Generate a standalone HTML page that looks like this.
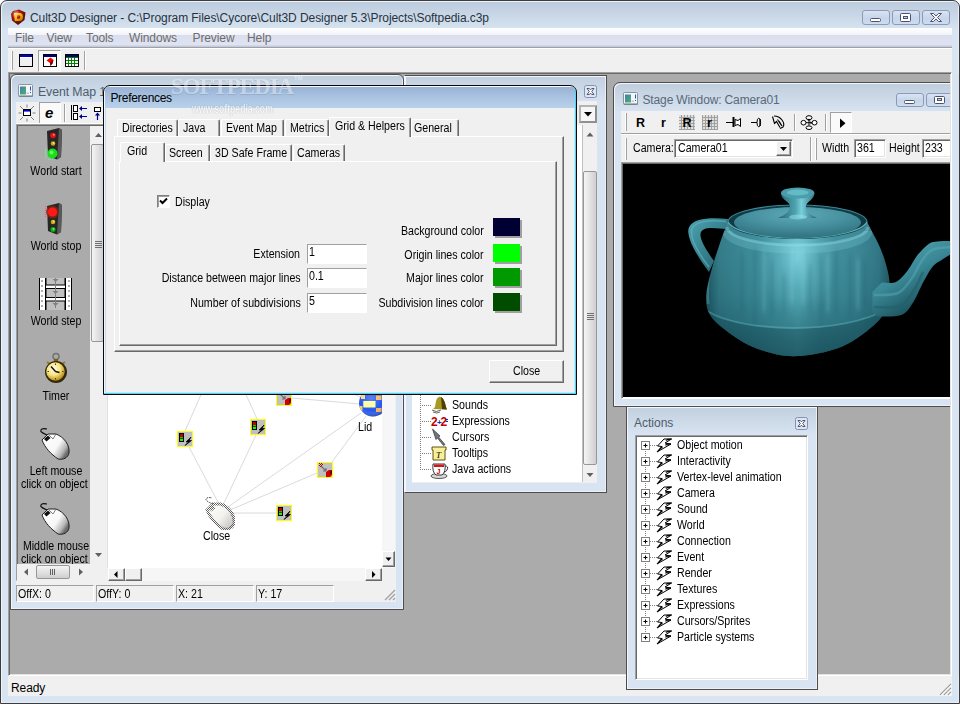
<!DOCTYPE html><html><head><meta charset="utf-8"><title>Cult3D Designer</title><style>
*{box-sizing:border-box;margin:0;padding:0}
html,body{width:960px;height:704px;overflow:hidden;background:#fff}
body{position:relative;font-family:"Liberation Sans",sans-serif}
#root{position:absolute;left:0;top:0;width:960px;height:704px;overflow:hidden}
#root div,#root svg{position:absolute}
.s{font-size:12.3px;line-height:13px;white-space:pre;transform:scaleX(.865);transform-origin:0 0}
.s.r{transform-origin:100% 0}.s.c{transform-origin:50% 0}
.sunk1{border:1px solid;border-color:#a0a0a0 #fff #fff #a0a0a0;background:#fff}
.chk{border:1px solid;border-color:#808080 #fff #fff #808080;box-shadow:inset 1px 1px 0 #a0a0a0;background:#fff}
.u{font-size:12px;line-height:14px;letter-spacing:-0.1px;white-space:pre}
.sunk{border:1px solid;border-color:#a0a0a0 #fff #fff #a0a0a0;box-shadow:inset 1px 1px 0 #696969,inset -1px -1px 0 #e3e3e3;background:#fff}
.rais{border:1px solid;border-color:#fff #696969 #696969 #fff;box-shadow:inset -1px -1px 0 #a0a0a0,inset 1px 1px 0 #f0f0f0;background:#f0f0f0}
.tab{border:1px solid;border-color:#fff #696969 transparent #fff;border-bottom:0;box-shadow:inset -1px 0 0 #a0a0a0;border-radius:2px 2px 0 0;background:#f0f0f0}
.pane{border:1px solid;border-color:#fff #696969 #696969 #fff;box-shadow:inset -1px -1px 0 #a0a0a0;background:#f0f0f0}
.cap{border:1px solid #8b9ab9;border-radius:3px;background:linear-gradient(#d9e4f3,#c6d5ea 55%,#cfdcee)}
.frame{border:1px solid #4d4d4d;background:#d8e4f1;box-shadow:inset 1px 1px 0 #f3f7fc, inset -1px -1px 0 #e9f0f8}
.sw{box-shadow:2px 2px 0 #a0a0a0}
.thumb{border:1px solid #979797;border-radius:2px;background:linear-gradient(90deg,#f5f5f5,#e2e2e2 50%,#cfcfcf)}
.thumbh{border:1px solid #979797;border-radius:2px;background:linear-gradient(#f5f5f5,#e2e2e2 50%,#cfcfcf)}
</style></head><body><div id="root">
<div style="left:0px;top:0px;width:960px;height:704px;border:1px solid #3c3c3c;border-radius:7px 7px 0 0;background:linear-gradient(#bbcbdd 0,#d8e4f1 30px,#d8e4f1 100%);box-shadow:inset 1px 1px 0 #eef3fb,inset -1px -1px 0 #e4edf8"></div>
<svg style="left:10px;top:9px" width="17" height="17" viewBox="0 0 17 17"><defs><radialGradient id="ig" cx="35%" cy="30%" r="80%"><stop offset="0" stop-color="#ffb8a8"/><stop offset=".35" stop-color="#b01616"/><stop offset="1" stop-color="#3a0606"/></radialGradient><linearGradient id="gd" x1="0" y1="0" x2="1" y2="1"><stop offset="0" stop-color="#fff3a0"/><stop offset=".5" stop-color="#f0b400"/><stop offset="1" stop-color="#a86a00"/></linearGradient></defs><path d="M3 2 L9 0.5 L15.5 3.5 L14.5 11 L8 16 L2 11.5 L1 5 Z" fill="url(#ig)"/><path d="M4 4 H9.5 Q13 4 13 8 Q13 12 9.5 12 H4.8 Z M7 6.2 V9.8 H9 Q10.3 9.8 10.3 8 Q10.3 6.2 9 6.2 Z" fill="url(#gd)" fill-rule="evenodd"/></svg>
<div class="u" style="top:10.8px;color:#27323e;letter-spacing:-.07px;left:30px;">Cult3D Designer - C:\Program Files\Cycore\Cult3D Designer 5.3\Projects\Softpedia.c3p</div>
<div class="cap" style="left:862px;top:10px;width:28px;height:15px;"></div>
<div class="cap" style="left:892px;top:10px;width:28px;height:15px;"></div>
<div class="cap" style="left:922px;top:10px;width:28px;height:15px;"></div>
<svg style="left:862px;top:10px" width="88" height="15" viewBox="0 0 88 15"><rect x="8.5" y="8.5" width="10" height="3" rx="1" fill="#fff" stroke="#4a526e"/><rect x="38.5" y="3.5" width="10" height="8" rx="1" fill="#fff" stroke="#4a526e"/><rect x="41.5" y="6.5" width="4" height="2" fill="#c6d5ea" stroke="#4a526e"/><path d="M68.5 3.5 h3 l2.5 2.6 l2.5 -2.6 h3 l-4 4 l4 4 h-3 l-2.5 -2.6 l-2.5 2.6 h-3 l4 -4 z" fill="#fff" stroke="#4a526e" stroke-linejoin="round"/></svg>
<div style="left:8px;top:28px;width:944px;height:19px;background:linear-gradient(#fff 0,#f1f3f9 7px,#d9dded 7px,#e0e4f2 17px,#c3cbe0 18px)"></div>
<div style="left:8px;top:47px;width:944px;height:1px;background:#a0a0a0"></div>
<div style="left:8px;top:48px;width:944px;height:1px;background:#fff"></div>
<div class="u" style="top:30.8px;color:#6d6d6d;left:15px;">File</div>
<div class="u" style="top:30.8px;color:#6d6d6d;left:46.5px;">View</div>
<div class="u" style="top:30.8px;color:#6d6d6d;left:86px;">Tools</div>
<div class="u" style="top:30.8px;color:#6d6d6d;left:129px;">Windows</div>
<div class="u" style="top:30.8px;color:#6d6d6d;left:192.5px;">Preview</div>
<div class="u" style="top:30.8px;color:#6d6d6d;left:247px;">Help</div>
<div style="left:8px;top:49px;width:944px;height:23px;background:#f0f0f0"></div>
<div style="left:11px;top:51px;width:1px;height:19px;background:#fff"></div>
<div style="left:12px;top:51px;width:1px;height:19px;background:#a0a0a0"></div>
<div style="left:84px;top:51px;width:1px;height:19px;background:#a0a0a0"></div>
<div style="left:85px;top:51px;width:1px;height:19px;background:#fff"></div>
<div style="left:38px;top:50px;width:23px;height:22px;background:#f8f8f8;border:1px solid;border-color:#a0a0a0 #fff #fff #a0a0a0"></div>
<svg style="left:18px;top:53px" width="64" height="15" viewBox="0 0 64 15" shape-rendering="crispEdges"><rect x="1.500" y="1.500" width="13" height="12" fill="#f0f0f0" stroke="#000"/><rect x="2" y="2" width="12" height="2" fill="#0000d0"/><rect x="2" y="4" width="12" height="1" fill="#fff"/><rect x="25.500" y="1.500" width="13" height="12" fill="#fff" stroke="#000"/><rect x="26" y="2" width="12" height="2" fill="#000080"/><rect x="47.500" y="1.500" width="13" height="12" fill="#fff" stroke="#000"/><rect x="48" y="2" width="12" height="2" fill="#000080"/><path d="M48 4.500h12 M48 7.500h12 M48 10.500h12 M50.500 4v9 M53.500 4v9 M56.500 4v9" stroke="#008000" stroke-width="1"/></svg>
<svg style="left:42px;top:53px" width="16" height="15" viewBox="24 0 16 15"><path d="M32.500 4.500 l3 2.500 l-1 3.500 l-2 2.500 l-.5 -3 l-3.500 -2.500 z" fill="#ff0000"/><path d="M35.500 7 l-1 3.500 l-2 2.500 l-.5 -3 l1.500 -2.500z" fill="#800000"/></svg>
<div style="left:8px;top:72px;width:944px;height:604px;background:#ababab;border:1px solid;border-color:#a0a0a0 #fff #fff #a0a0a0;box-shadow:inset 1px 1px 0 #696969,inset -1px -1px 0 #e3e3e3"></div>
<div style="left:8px;top:676px;width:944px;height:20px;background:#f0f0f0"></div>
<div class="u" style="top:680.8px;color:#000;left:11px;">Ready</div>
<svg style="left:939px;top:683px" width="13" height="13" viewBox="0 0 13 13"><path d="M12 1 L1 12 M12 5 L5 12 M12 9 L9 12" stroke="#a0a0a0" stroke-width="1.3"/><path d="M13 1.5 L1.5 13 M13 5.5 L5.5 13 M13 9.5 L9.5 13" stroke="#fff" stroke-width="1"/></svg>
<div class="frame" style="left:10px;top:74px;width:394px;height:536px;border-radius:6px 6px 0 0;background:linear-gradient(#bfcddd 0,#d8e4f1 30px,#d8e4f1 100%)"></div>
<svg style="left:18px;top:84px" width="15" height="13" viewBox="0 0 15 13"><defs><linearGradient id="wi18" x1="0" y1="0" x2="1" y2="1"><stop offset="0" stop-color="#3f7fb5"/><stop offset="1" stop-color="#4fb06a"/></linearGradient></defs><rect x="0.5" y="0.5" width="14" height="12" rx="1" fill="#f4f6f8" stroke="#8a949e"/><rect x="1" y="11.5" width="14" height="1" fill="#6a737c"/><rect x="2" y="2.5" width="6" height="8" fill="url(#wi18)"/><rect x="8.500" y="8.500" width="2.500" height="1.500" fill="#c4cacf"/><rect x="12" y="2.500" width="1" height="4" fill="#2a50c8"/><rect x="12" y="8" width="1" height="1" fill="#2a50c8"/></svg>
<div class="u" style="top:84.8px;color:#4f5d6b;font-size:12.3px;left:38px;">Event Map 1</div>
<div style="left:16px;top:102px;width:380px;height:500px;background:#f0f0f0"></div>
<div style="left:39px;top:102px;width:22px;height:22px;background:#fafafa;border:1px solid;border-color:#a0a0a0 #fff #fff #a0a0a0"></div>
<div style="left:64px;top:104px;width:1px;height:18px;background:#a0a0a0"></div>
<div style="left:65px;top:104px;width:1px;height:18px;background:#fff"></div>
<svg style="left:18px;top:103px" width="86" height="20" viewBox="0 0 86 20"><path d="M2 3 l3 3 M9 1.5 v3 M16 3 l-3 3 M0.5 10 h3 M17.5 10 h-3 M2 17 l3 -3 M9 18.5 v-3 M16 17 l-3 -3" stroke="#808080" stroke-width="1"/><rect x="5.5" y="6.5" width="7" height="6" fill="#fff" stroke="#000"/><rect x="6" y="7" width="6" height="1.6" fill="#0000d0"/><text x="27" y="15" font-family="Liberation Sans" font-style="italic" font-weight="bold" font-size="15" fill="#000">e</text><path d="M53.5 2 v15" stroke="#000" stroke-width="1"/><rect x="55.5" y="2.5" width="4" height="6" fill="#fff" stroke="#000"/><rect x="55.5" y="10.5" width="4" height="6" fill="#fff" stroke="#000"/><path d="M62 5.5 h7 M62 13.5 h7" stroke="#000090" stroke-width="1.2"/><path d="M61 5.5 l3 -2.5 v5z M61 13.5 l3 -2.5 v5z" fill="#000090"/><rect x="76.5" y="4.500" width="6" height="4" fill="#fff" stroke="#000"/><path d="M79.5 17 v-6" stroke="#000090" stroke-width="1.2"/><path d="M79.5 9.5 l-2.6 3 h5.2z" fill="#000090"/></svg>
<div style="left:16px;top:123px;width:380px;height:1px;background:#fff"></div>
<div style="left:16px;top:124px;width:91px;height:457px;background:#ababab;border:1px solid;border-color:#a0a0a0 #f0f0f0 #f0f0f0 #a0a0a0;box-shadow:inset 1px 1px 0 #696969"></div>
<div style="left:90px;top:126px;width:16px;height:439px;background:#f0f0f0"></div>
<div class="thumb" style="left:91px;top:144px;width:13px;height:198px;"></div>
<svg style="left:90px;top:125px" width="16" height="440" viewBox="0 0 16 440"><path d="M5 12 l3.5 -4 l3.5 4z" fill="#606060"/><path d="M5 428 l3.500 4 l3.5 -4z" fill="#606060"/><path d="M5 116.500h7M5 118.500h7M5 120.500h7M5 122.500h7" stroke="#707070"/></svg>
<div style="left:17px;top:564px;width:73px;height:16px;background:#f0f0f0"></div>
<div class="thumbh" style="left:36px;top:565px;width:34px;height:14px;"></div>
<svg style="left:17px;top:564px" width="73" height="16" viewBox="0 0 73 16"><path d="M11 4.500 v7 l-4 -3.500z" fill="#606060"/><path d="M62 4.500 v7 l4 -3.500z" fill="#606060"/><path d="M33.500 5v6M35.500 5v6M37.500 5v6" stroke="#606060"/></svg>
<div style="left:90px;top:564px;width:18px;height:16px;background:#f0f0f0"></div>
<svg style="left:43px;top:128px" width="22" height="32" viewBox="0 0 22 32"><path d="M4 3 L16 0 L19 2 L18 29 L14 31.500 L5 28 Z" fill="#262626"/><path d="M16 0 L19 2 L18 29 L14 31.500 Z" fill="#5a5a5a"/><circle cx="10" cy="7.500" r="2.800" fill="#e81010"/><circle cx="10.800" cy="6.800" r="1" fill="#ff8080"/><circle cx="10" cy="15.500" r="2.300" fill="#c8a818"/><circle cx="10.600" cy="15" r=".9" fill="#f8e860"/><circle cx="9.500" cy="25.500" r="5" fill="#18e018"/><circle cx="8.500" cy="24.500" r="2" fill="#60ff60"/><path d="M2.500 20 v11 M4 21.500 v8 M5 31.500 h6" stroke="#60ff90" stroke-width=".8" stroke-dasharray="1 1"/></svg>
<div class="s c" style="top:164.5px;color:#000;left:-44.5px;width:200px;text-align:center;">World start</div>
<svg style="left:43px;top:203px" width="22" height="32" viewBox="0 0 22 32"><path d="M4 3 L16 0 L19 2 L18 29 L14 31.500 L5 28 Z" fill="#262626"/><path d="M16 0 L19 2 L18 29 L14 31.500 Z" fill="#5a5a5a"/><circle cx="9.500" cy="9" r="6.300" fill="#702810"/><circle cx="9.500" cy="9" r="4.600" fill="#ff1818"/><path d="M2.500 3 v12 M4 4.500 v9" stroke="#ff5070" stroke-width=".8" stroke-dasharray="1 1"/><circle cx="10" cy="19" r="2.300" fill="#c8a818"/><circle cx="10.600" cy="18.500" r=".9" fill="#f8e860"/><circle cx="10" cy="26.500" r="2.500" fill="#10b010"/><circle cx="10.500" cy="26" r="1" fill="#50ff50"/></svg>
<div class="s c" style="top:239.5px;color:#000;left:-44.5px;width:200px;text-align:center;">World stop</div>
<svg style="left:39px;top:278px" width="33" height="32" viewBox="0 0 33 32"><rect x="0" y="0" width="33" height="32" fill="#fff"/><rect x="0" y="0" width="1" height="32" fill="#000"/><rect x="32" y="0" width="1" height="32" fill="#000"/><rect x="6" y="0" width="1" height="32" fill="#000"/><rect x="26" y="0" width="1" height="32" fill="#000"/><rect x="7" y="-3" width="19" height="10" fill="#c0c0c0" stroke="#000"/><rect x="7" y="10.500" width="19" height="9" fill="#c0c0c0" stroke="#000"/><rect x="7" y="23" width="19" height="12" fill="#c0c0c0" stroke="#000"/><path d="M2 2h2v2h-2zM2 7h2v2h-2zM2 12h2v2h-2zM2 17h2v2h-2zM2 22h2v2h-2zM2 27h2v2h-2zM29 2h2v2h-2zM29 7h2v2h-2zM29 12h2v2h-2zM29 17h2v2h-2zM29 22h2v2h-2zM29 27h2v2h-2z" fill="#b0b0b0"/><path d="M16.500 0v30" stroke="#808080"/><path d="M13.500 1h6l-3 3zM13.500 13h6l-3 3zM13.500 25h6l-3 3z" fill="#808080"/></svg>
<div class="s c" style="top:314.5px;color:#000;left:-44.5px;width:200px;text-align:center;">World step</div>
<svg style="left:44px;top:352px" width="24" height="32" viewBox="0 0 24 32"><defs><radialGradient id="tm" cx="40%" cy="35%" r="65%"><stop offset="0" stop-color="#fffce8"/><stop offset=".55" stop-color="#f8e480"/><stop offset="1" stop-color="#b88c18"/></radialGradient></defs><circle cx="12" cy="4.500" r="3" fill="none" stroke="#707070" stroke-width="1.4"/><rect x="10" y="7" width="4" height="3" fill="#806010"/><path d="M3 10 l3 2 M21 10 l-3 2" stroke="#a07818" stroke-width="2"/><circle cx="12" cy="20" r="11" fill="#302810"/><circle cx="11.500" cy="19.500" r="9.200" fill="url(#tm)"/><path d="M11.500 19.500 L7 14.500 M11.500 19.500 L15.500 20.500" stroke="#101010" stroke-width="1.400"/><path d="M11.500 11.500v1.500M11.500 26v1.500M3.500 19.500h1.500M18 19.500h1.500" stroke="#504010" stroke-width="1"/></svg>
<div class="s c" style="top:389.7px;color:#000;left:-44.5px;width:200px;text-align:center;">Timer</div>
<svg style="left:39px;top:428px" width="31" height="32" viewBox="0 0 31 32"><defs><linearGradient id="ms428" x1="0" y1="0" x2="1" y2=".6"><stop offset="0" stop-color="#fff"/><stop offset=".62" stop-color="#f8f8f8"/><stop offset=".88" stop-color="#b4b4b4"/><stop offset="1" stop-color="#6c6c6c"/></linearGradient></defs><path d="M8 7 C3 5 0 3 3 1 C5 0 7 1 8 1" fill="none" stroke="#101010" stroke-width="1.200"/><path d="M3 12 L9 6 L17 6 C25 9 31 17 30 25 C29 30 24 32 19 31 C12 26 6 20 3 12 Z" fill="url(#ms428)" stroke="#202020" stroke-width="1"/><path d="M5 11 L9 7.500 L11.500 10 L7.500 13.500 Z" fill="#101010"/><path d="M9.500 6.500 L14 11 M17 6 L14 11" stroke="#606060" stroke-width=".8" fill="none"/></svg>
<div class="s c" style="top:464.5px;color:#000;left:-44.5px;width:200px;text-align:center;">Left mouse</div>
<div class="s" style="left:20.500px;top:477.500px;width:79.500px;overflow:hidden">click on object</div>
<svg style="left:39px;top:503px" width="31" height="32" viewBox="0 0 31 32"><defs><linearGradient id="ms503" x1="0" y1="0" x2="1" y2=".6"><stop offset="0" stop-color="#fff"/><stop offset=".62" stop-color="#f8f8f8"/><stop offset=".88" stop-color="#b4b4b4"/><stop offset="1" stop-color="#6c6c6c"/></linearGradient></defs><path d="M8 7 C3 5 0 3 3 1 C5 0 7 1 8 1" fill="none" stroke="#101010" stroke-width="1.200"/><path d="M3 12 L9 6 L17 6 C25 9 31 17 30 25 C29 30 24 32 19 31 C12 26 6 20 3 12 Z" fill="url(#ms503)" stroke="#202020" stroke-width="1"/><path d="M5 11 L9 7.500 L11.500 10 L7.500 13.500 Z" fill="#101010"/><path d="M9.500 6.500 L14 11 M17 6 L14 11" stroke="#606060" stroke-width=".8" fill="none"/></svg>
<div class="s c" style="top:539.5px;color:#000;left:-44.5px;width:200px;text-align:center;">Middle mouse</div>
<div class="s" style="left:20.500px;top:552.700px;width:79.500px;height:11px;overflow:hidden">click on object</div>
<div style="left:107px;top:124px;width:276px;height:445px;background:#fff;border:1px solid;border-color:#696969 #fff #fff #e0e0e0"></div>
<div style="left:382px;top:125px;width:13px;height:443px;background:#f6f6f6"></div>
<div style="left:108px;top:568px;width:274px;height:13px;background:#f6f6f6"></div>
<div class="rais" style="left:382px;top:551px;width:13px;height:16px;"></div>
<div class="rais" style="left:365px;top:568px;width:17px;height:13px;"></div>
<div class="rais" style="left:108px;top:568px;width:17px;height:13px;"></div>
<div class="rais" style="left:125px;top:568px;width:17px;height:13px;"></div>
<svg style="left:382px;top:551px" width="13" height="16" viewBox="0 0 13 16"><path d="M3.500 6.500 h6 l-3 3.500z" fill="#000"/></svg>
<svg style="left:365px;top:568px" width="17" height="13" viewBox="0 0 17 13"><path d="M7 3 v7 l3.500 -3.500z" fill="#000"/></svg>
<svg style="left:108px;top:568px" width="17" height="13" viewBox="0 0 17 13"><path d="M9.500 3 v7 l-3.500 -3.500z" fill="#000"/></svg>
<svg style="left:108px;top:125px" width="274" height="443" viewBox="108 125 274 443"><g stroke="#dadada" stroke-width="1" fill="none"><path d="M220 506 L189 447 M185 431 L203 390"/><path d="M224 503 L256 435 M257 419 L244 390"/><path d="M228 507 L361 413"/><path d="M230 510 L317 473"/><path d="M332 462 L366 416"/><path d="M232 513 L276 513"/><path d="M292 398 L360 404 M350 392 L362 398"/></g></svg>
<svg style="left:177px;top:431px" width="16" height="16" viewBox="0 0 16 16"><rect x=".5" y=".5" width="15" height="15" fill="#c0c0c0" stroke="#ffff00"/><rect x="2" y="2" width="5" height="9" fill="#000"/><rect x="3" y="3" width="3" height="2" fill="#c00000"/><rect x="3" y="5.500" width="3" height="2" fill="#a08000"/><rect x="3" y="8" width="3" height="2" fill="#00ff00"/><path d="M14 6 L9 11 h2.500 L8 14.500 L14.500 9.500 h-2.500z" fill="#000" stroke="#000" stroke-width=".7"/></svg>
<svg style="left:250px;top:419px" width="16" height="16" viewBox="0 0 16 16"><rect x=".5" y=".5" width="15" height="15" fill="#c0c0c0" stroke="#ffff00"/><rect x="2" y="2" width="5" height="9" fill="#000"/><rect x="3" y="3" width="3" height="2" fill="#c00000"/><rect x="3" y="5.500" width="3" height="2" fill="#a08000"/><rect x="3" y="8" width="3" height="2" fill="#00ff00"/><path d="M14 6 L9 11 h2.500 L8 14.500 L14.500 9.500 h-2.500z" fill="#000" stroke="#000" stroke-width=".7"/></svg>
<svg style="left:276px;top:390px" width="16" height="16" viewBox="0 0 16 16"><rect x=".5" y=".5" width="15" height="15" fill="#c0c0c0" stroke="#ffff00"/><path d="M2 1h1v1h-1zM4 1h1v1h-1zM3 2h1v1h-1zM5 2h1v1h-1zM2 3h1v1h-1zM4 3h1v1h-1zM3 4h1v1h-1z" fill="#c00000"/><path d="M4 4 L9 9 M9 9 v-3 M9 9 h-3" stroke="#707070" stroke-width="1.200" fill="none"/><path d="M9 10 l3 -2 h3 v5 l-2 2 h-4z" fill="#d00000"/><path d="M13 13 l2 -2 v-3 l-2 2z" fill="#600000"/></svg>
<svg style="left:317px;top:462px" width="16" height="16" viewBox="0 0 16 16"><rect x=".5" y=".5" width="15" height="15" fill="#c0c0c0" stroke="#ffff00"/><path d="M2 1h1v1h-1zM4 1h1v1h-1zM3 2h1v1h-1zM5 2h1v1h-1zM2 3h1v1h-1zM4 3h1v1h-1zM3 4h1v1h-1z" fill="#c00000"/><path d="M4 4 L9 9 M9 9 v-3 M9 9 h-3" stroke="#707070" stroke-width="1.200" fill="none"/><path d="M9 10 l3 -2 h3 v5 l-2 2 h-4z" fill="#d00000"/><path d="M13 13 l2 -2 v-3 l-2 2z" fill="#600000"/></svg>
<svg style="left:276px;top:505px" width="16" height="16" viewBox="0 0 16 16"><rect x=".5" y=".5" width="15" height="15" fill="#c0c0c0" stroke="#ffff00"/><rect x="2" y="2" width="5" height="9" fill="#000"/><rect x="3" y="3" width="3" height="2" fill="#c00000"/><rect x="3" y="5.500" width="3" height="2" fill="#a08000"/><rect x="3" y="8" width="3" height="2" fill="#00ff00"/><path d="M14 6 L9 11 h2.500 L8 14.500 L14.500 9.500 h-2.500z" fill="#000" stroke="#000" stroke-width=".7"/></svg>
<svg style="left:359px;top:388px" width="23" height="29" viewBox="0 0 23 29"><defs><radialGradient id="lb" cx="40%" cy="35%" r="75%"><stop offset="0" stop-color="#fff" stop-opacity=".25"/><stop offset=".55" stop-color="#fff" stop-opacity="0"/><stop offset=".85" stop-color="#202020" stop-opacity=".45"/><stop offset="1" stop-color="#101010" stop-opacity=".85"/></radialGradient><clipPath id="lc"><ellipse cx="14" cy="15" rx="14" ry="13.500"/></clipPath></defs><g clip-path="url(#lc)"><rect x="0" y="0" width="30" height="30" fill="#2458f0"/><rect x="4.300" y="13" width="12.200" height="6.500" fill="#ffff98"/><rect x="2" y="6" width="4" height="5" fill="#f8dc78"/><rect x="17" y="7.500" width="5.500" height="4.500" fill="#f8b860"/><rect x="17" y="20" width="5.500" height="4" fill="#f8b058"/><rect x="0" y="18" width="3.500" height="4.500" fill="#f8c870"/><rect x="8" y="2" width="6" height="3" fill="#f0d070"/><rect x="0" y="0" width="30" height="30" fill="url(#lb)"/></g></svg>
<div class="s" style="top:420.6px;color:#000;left:357.6px;">Lid</div>
<svg style="left:204px;top:496px" width="31" height="34" viewBox="0 0 31 34"><defs><pattern id="dz" width="2" height="2" patternUnits="userSpaceOnUse"><rect width="1" height="1" fill="#606060"/><rect x="1" y="1" width="1" height="1" fill="#606060"/></pattern><linearGradient id="mc" x1="0" y1="0" x2="1" y2=".7"><stop offset="0" stop-color="#fff"/><stop offset=".6" stop-color="#f4f2ec"/><stop offset="1" stop-color="#c8c8c8"/></linearGradient></defs><path d="M9 8 C4 6 0 4 3 2 C5 1 7 2 8 1.500" fill="none" stroke="#404040" stroke-width="1" stroke-dasharray="1.500 1"/><path d="M3 14 L9 8 L17 8 C25 11 31 19 30 27 C29 32 24 34 19 33 C12 28 6 22 3 14 Z" fill="url(#mc)"/><path d="M3 14 L9 8 L17 8 C25 11 31 19 30 27 C29 32 24 34 19 33 C12 28 6 22 3 14 Z" fill="none" stroke="url(#dz)" stroke-width="3"/><path d="M5 13 L9 9.500 L11.500 12 L7.500 15.500 Z" fill="url(#dz)"/></svg>
<div class="s" style="top:530.2px;color:#000;left:203.2px;">Close</div>
<div style="left:16px;top:585px;width:78px;height:17px;border:1px solid;border-color:#a0a0a0 #fff #fff #a0a0a0"></div>
<div class="s" style="top:587.7px;color:#000;left:18px;">OffX: 0</div>
<div style="left:96px;top:585px;width:78px;height:17px;border:1px solid;border-color:#a0a0a0 #fff #fff #a0a0a0"></div>
<div class="s" style="top:587.7px;color:#000;left:98px;">OffY: 0</div>
<div style="left:176px;top:585px;width:78px;height:17px;border:1px solid;border-color:#a0a0a0 #fff #fff #a0a0a0"></div>
<div class="s" style="top:587.7px;color:#000;left:178px;">X: 21</div>
<div style="left:256px;top:585px;width:78px;height:17px;border:1px solid;border-color:#a0a0a0 #fff #fff #a0a0a0"></div>
<div class="s" style="top:587.7px;color:#000;left:258px;">Y: 17</div>
<svg style="left:384px;top:589px" width="12" height="12" viewBox="0 0 12 12"><path d="M11 1 L1 11 M11 5 L5 11 M11 9 L9 11" stroke="#a0a0a0" stroke-width="1.300"/></svg>
<div class="frame" style="left:404px;top:75px;width:203px;height:418px;border-left-color:#f3f7fc;background:linear-gradient(#c1cfdf 0,#d8e4f1 28px,#d8e4f1 100%)"></div>
<svg style="left:584px;top:85px" width="13" height="13" viewBox="0 0 13 13"><rect x=".5" y=".5" width="12" height="12" rx="2" fill="#dde6f2" stroke="#8391b3"/><path d="M3 3.500 h2.300 l1.200 1.400 l1.200 -1.400 h2.300 l-2.300 3 l2.300 3 h-2.300 l-1.200 -1.400 l-1.200 1.400 h-2.300 l2.300 -3z" fill="#fff" stroke="#3f4763" stroke-width=".9" stroke-linejoin="round"/></svg>
<div style="left:412px;top:101px;width:185px;height:382px;background:#f0f0f0"></div>
<div style="left:412px;top:125px;width:171px;height:357px;background:#fff"></div>
<div style="left:582px;top:125px;width:1px;height:357px;background:#c0c0c0"></div>
<div style="left:583px;top:125px;width:14px;height:357px;background:#f0f0f0"></div>
<div style="left:579px;top:105px;width:18px;height:18px;border:2px solid;border-color:#b4b4b4 #909090 #909090 #b4b4b4;background:#f6f6f6"></div>
<svg style="left:579px;top:105px" width="18" height="18" viewBox="0 0 18 18"><path d="M5 7 h8 l-4 4.500z" fill="#000"/></svg>
<div class="thumb" style="left:583px;top:171px;width:14px;height:294px;"></div>
<svg style="left:583px;top:125px" width="14" height="357" viewBox="0 0 14 357"><path d="M3.500 11.500 l3.500 -4 l3.500 4z" fill="#606060"/><path d="M3.500 348 l3.500 4 l3.500 -4z" fill="#606060"/><path d="M4 188.500h7M4 190.500h7M4 192.500h7M4 194.500h7" stroke="#707070"/></svg>
<svg style="left:412px;top:395px" width="60" height="87" viewBox="412 395 60 87"><path d="M420.500 395 V470 M422 405.500 H432 M422 421.500 H432 M422 437.500 H432 M422 453.500 H432 M422 469.500 H432" stroke="#808080" stroke-dasharray="1 1" fill="none"/><path d="M439 397 C442 396 445 401 446 407 L447 409.500 L433 409 L435 407 C436 402 436 398 439 397Z" fill="#a89a20"/><path d="M441 397 C443 398 445 401 446 407 L447 409.500 L442 409.300 Z" fill="#4a4008"/><path d="M432 410 q4 3 9 0 M433 412 q4 2 7 0" stroke="#404040" fill="none" stroke-width=".8"/><text x="431" y="426" font-family="Liberation Sans" font-weight="bold" font-size="12" fill="#c00000" letter-spacing="-1">2</text><text x="437" y="425" font-family="Liberation Sans" font-weight="bold" font-size="8" fill="#0030c0">+</text><text x="440.500" y="426" font-family="Liberation Sans" font-weight="bold" font-size="12" fill="#c00000">2</text><path d="M446 419.500h2M446 421.500h2" stroke="#0030c0"/><path d="M432.500 429 L440 436 L438.500 437 L445 444.500 L443.500 445.500 L437.500 438 L436 439.500 Z" fill="#70787f" stroke="#303030" stroke-width=".7"/><path d="M432 447 h14 v3 h-1 v10 h-12 v-10 h-1z" fill="#f8f098" stroke="#504000" stroke-width=".9"/><text x="436" y="458" font-family="Liberation Serif" font-style="italic" font-size="9" fill="#000">T</text><ellipse cx="439" cy="476" rx="8" ry="2.500" fill="#d8d8d8" stroke="#303030" stroke-width=".8"/><path d="M433 464 h12 q1 8 -3 11 h-6 q-4 -3 -3 -11z" fill="#fff" stroke="#202020" stroke-width=".9"/><path d="M434 464.500 h10 v2.500 h-10z" fill="#d01818"/><path d="M445 466 q4 0 2 4 q-1 2 -3 2" fill="none" stroke="#202020" stroke-width=".9"/><text x="436.500" y="473.500" font-family="Liberation Sans" font-weight="bold" font-size="7" fill="#c00000">J</text></svg>
<div class="s" style="top:398.9px;color:#000;left:451.5px;">Sounds</div>
<div class="s" style="top:414.9px;color:#000;left:451.5px;">Expressions</div>
<div class="s" style="top:430.9px;color:#000;left:451.5px;">Cursors</div>
<div class="s" style="top:446.9px;color:#000;left:451.5px;">Tooltips</div>
<div class="s" style="top:462.9px;color:#000;left:451.5px;">Java actions</div>
<div style="left:613px;top:82px;width:337px;height:325px;overflow:hidden">
<div class="frame" style="left:0px;top:0px;width:350px;height:325px;border-radius:7px 7px 0 0;background:linear-gradient(#bfcddd 0,#d8e4f1 30px,#d8e4f1 100%)"></div>
</div>
<svg style="left:623px;top:92px" width="15" height="13" viewBox="0 0 15 13"><defs><linearGradient id="wi623" x1="0" y1="0" x2="1" y2="1"><stop offset="0" stop-color="#3f7fb5"/><stop offset="1" stop-color="#4fb06a"/></linearGradient></defs><rect x="0.5" y="0.5" width="14" height="12" rx="1" fill="#f4f6f8" stroke="#8a949e"/><rect x="1" y="11.5" width="14" height="1" fill="#6a737c"/><rect x="2" y="2.5" width="6" height="8" fill="url(#wi623)"/><rect x="8.500" y="8.500" width="2.500" height="1.500" fill="#c4cacf"/><rect x="12" y="2.500" width="1" height="4" fill="#2a50c8"/><rect x="12" y="8" width="1" height="1" fill="#2a50c8"/></svg>
<div class="u" style="top:93.0px;color:#5a6878;letter-spacing:-0.14px;left:642.5px;">Stage Window: Camera01</div>
<div class="cap" style="left:896px;top:93px;width:28px;height:14px;"></div>
<div style="left:926px;top:93px;width:24px;height:14px;overflow:hidden"><div class="cap" style="left:0;top:0;width:28px;height:14px"></div></div>
<svg style="left:896px;top:93px" width="54" height="14" viewBox="0 0 54 14"><rect x="8.500" y="7.500" width="10" height="3" rx="1" fill="#fff" stroke="#4a526e"/><rect x="38.500" y="3.500" width="10" height="7" rx="1" fill="#fff" stroke="#4a526e"/><rect x="41.500" y="5.500" width="4" height="2" fill="#c6d5ea" stroke="#4a526e"/></svg>
<div style="left:621px;top:111px;width:329px;height:22px;background:#f0f0f0"></div>
<div style="left:621px;top:133px;width:329px;height:2px;background:linear-gradient(#a0a0a0 50%,#fff 50%)"></div>
<div style="left:621px;top:135px;width:329px;height:27px;background:#f0f0f0"></div>
<div style="left:621px;top:162px;width:329px;height:2px;background:#d8e4f1"></div>
<div style="left:625px;top:113px;width:1px;height:18px;background:#fff"></div>
<div style="left:626px;top:113px;width:1px;height:18px;background:#a0a0a0"></div>
<div style="left:625px;top:138px;width:1px;height:22px;background:#fff"></div>
<div style="left:626px;top:138px;width:1px;height:22px;background:#a0a0a0"></div>
<div style="left:815px;top:138px;width:1px;height:22px;background:#fff"></div>
<div style="left:816px;top:138px;width:1px;height:22px;background:#a0a0a0"></div>
<div style="left:810px;top:137px;width:1px;height:24px;background:#a0a0a0"></div>
<div style="left:811px;top:137px;width:1px;height:24px;background:#fff"></div>
<div style="left:794px;top:114px;width:1px;height:17px;background:#a0a0a0"></div>
<div style="left:795px;top:114px;width:1px;height:17px;background:#fff"></div>
<div style="left:825px;top:114px;width:1px;height:17px;background:#a0a0a0"></div>
<div style="left:826px;top:114px;width:1px;height:17px;background:#fff"></div>
<div style="left:830px;top:112px;width:22px;height:21px;background:#fafafa;border:1px solid;border-color:#a0a0a0 #fff #fff #a0a0a0"></div>
<svg style="left:621px;top:111px" width="329" height="22" viewBox="621 111 329 22"><defs><pattern id="gr" width="3" height="3" patternUnits="userSpaceOnUse"><rect width="3" height="3" fill="#e0e0e0"/><path d="M0 .5h3M.5 0v3" stroke="#a0a0a0"/></pattern></defs><text x="636" y="126.500" font-family="Liberation Sans" font-weight="bold" font-size="12.500" fill="#000">R</text><text x="661" y="126.500" font-family="Liberation Sans" font-weight="bold" font-size="12.500" fill="#000">r</text><rect x="679" y="115" width="16" height="15" fill="url(#gr)"/><text x="682.500" y="126.500" font-family="Liberation Sans" font-weight="bold" font-size="12.500" fill="#000">R</text><rect x="702" y="115" width="16" height="15" fill="url(#gr)"/><text x="707" y="126.500" font-family="Liberation Sans" font-weight="bold" font-size="12.500" fill="#000">r</text><path d="M726 122.500 h7" stroke="#000"/><path d="M733.500 117 v10" stroke="#000" stroke-width="2"/><path d="M735 119.500 L738 120.500 L740.500 118.500 V126.500 L738 124.500 L735 125.500 Z" fill="#fff" stroke="#000" stroke-linejoin="miter"/><path d="M751 122.500 h6" stroke="#000"/><ellipse cx="758.800" cy="122.500" rx="1.800" ry="4.300" fill="#fff" stroke="#000"/><path d="M760 119 v7" stroke="#000" stroke-width="1.300"/><path d="M772.500 116.500 l2 7 l2 -2 l3.500 6 M774 116 q5 0 8 4 q3 4 1 7 l-3 1.500 M779 121 l3 5 M777.500 119.500 l4 6" stroke="#000" fill="none" stroke-width="1.100"/><ellipse cx="809" cy="117.700" rx="3" ry="2" fill="#fff" stroke="#000"/><ellipse cx="809" cy="127.700" rx="3" ry="1.800" fill="#fff" stroke="#000"/><ellipse cx="803.500" cy="122.700" rx="2.500" ry="2.300" fill="#fff" stroke="#000"/><ellipse cx="814.500" cy="122.700" rx="2.500" ry="2.300" fill="#fff" stroke="#000"/><path d="M809 119.500v6 M806 122.700h6" stroke="#000"/><path d="M809 118.500l-1.500 2h3z M812.500 122.700 l-2 -1.500v3z" fill="#000"/><path d="M840 118.500 v9.500 l5.500 -4.700z" fill="#000"/></svg>
<div class="s" style="top:141.7px;color:#000;left:632.5px;">Camera:</div>
<div class="sunk" style="left:674px;top:139px;width:119px;height:19px;"></div>
<div class="s" style="top:141.7px;color:#000;left:677.5px;">Camera01</div>
<div class="rais" style="left:776px;top:141px;width:15px;height:15px;"></div>
<svg style="left:776px;top:141px" width="15" height="15" viewBox="0 0 15 15"><path d="M4 6 h7 l-3.500 4z" fill="#000"/></svg>
<div class="s" style="top:141.7px;color:#000;left:822px;">Width</div>
<div class="sunk" style="left:854px;top:139px;width:32px;height:19px;"></div>
<div class="s" style="top:141.7px;color:#000;left:857px;">361</div>
<div class="s" style="top:141.7px;color:#000;left:889px;">Height</div>
<div class="sunk" style="left:922px;top:139px;width:28px;height:19px;border-right-width:0;box-shadow:inset 1px 1px 0 #696969,inset 0 -1px 0 #e3e3e3"></div>
<div class="s" style="top:141.7px;color:#000;left:925px;">233</div>
<div style="left:621px;top:162px;width:329px;height:237px;border:1px solid;border-color:#a0a0a0 #fff #fff #a0a0a0;border-right-width:0;box-shadow:inset 1px 1px 0 #696969,inset 0 -1px 0 #fff;background:#000"></div>
<div style="left:622px;top:164px;width:328px;height:233px;overflow:hidden">
<svg style="left:0;top:0" width="328" height="233" viewBox="0 0 328 233">
<defs>
<linearGradient id="tbH" gradientUnits="userSpaceOnUse" x1="84" y1="0" x2="268" y2="0">
<stop offset="0" stop-color="#1c5460"/><stop offset=".07" stop-color="#317884"/><stop offset=".25" stop-color="#3b8997"/><stop offset=".4" stop-color="#4799a7"/><stop offset=".5" stop-color="#4fa4b2"/><stop offset=".62" stop-color="#41909e"/><stop offset=".82" stop-color="#3a8594"/><stop offset=".94" stop-color="#2f7381"/><stop offset="1" stop-color="#1f5561"/>
</linearGradient>
<linearGradient id="tbV" x1="0" y1="0" x2="0" y2="1">
<stop offset="0" stop-color="#bff" stop-opacity=".12"/><stop offset=".15" stop-color="#9ef" stop-opacity=".03"/><stop offset=".55" stop-color="#013038" stop-opacity=".08"/><stop offset=".72" stop-color="#013038" stop-opacity=".24"/><stop offset="1" stop-color="#012830" stop-opacity=".5"/>
</linearGradient>
<radialGradient id="thl" gradientUnits="userSpaceOnUse" cx="176" cy="92" r="64" gradientTransform="translate(176 92) scale(.6 1) translate(-176 -92)">
<stop offset="0" stop-color="#8fe4ee" stop-opacity=".72"/><stop offset=".5" stop-color="#7fd6e2" stop-opacity=".3"/><stop offset="1" stop-color="#7fd6e2" stop-opacity="0"/>
</radialGradient>
<radialGradient id="tlid" cx="50%" cy="25%" r="80%"><stop offset="0" stop-color="#5eaab8"/><stop offset=".5" stop-color="#468f9e"/><stop offset="1" stop-color="#2c6c7a"/></radialGradient>
<linearGradient id="tkn" x1="0" y1="0" x2="1" y2="0"><stop offset="0" stop-color="#276470"/><stop offset=".45" stop-color="#4fa3b1"/><stop offset=".6" stop-color="#79cedb"/><stop offset="1" stop-color="#276470"/></linearGradient>
<linearGradient id="thd" x1="0" y1="0" x2="1" y2="1"><stop offset="0" stop-color="#4fa2b0"/><stop offset=".5" stop-color="#37828f"/><stop offset="1" stop-color="#215b68"/></linearGradient>
<linearGradient id="tsp" gradientUnits="userSpaceOnUse" x1="270" y1="90" x2="300" y2="140"><stop offset="0" stop-color="#4c9eac"/><stop offset=".45" stop-color="#3a8795"/><stop offset="1" stop-color="#1e5561"/></linearGradient>
<filter id="tbl" x="-20%" y="-20%" width="140%" height="140%"><feGaussianBlur stdDeviation="1.600 3"/></filter>
<clipPath id="tbc"><path d="M105.5,58.0 C104.1,62.0 99.8,73.7 97.0,82.0 C94.2,90.3 91.1,99.5 89.0,107.7 C86.9,115.9 84.6,124.1 84.3,131.0 C84.0,137.9 84.3,143.6 87.0,149.0 C89.7,154.4 93.3,158.1 100.5,163.7 C107.7,169.3 118.6,177.9 130.3,182.7 C142.1,187.4 156.1,192.2 171.0,192.2 C185.9,192.2 205.7,188.3 219.7,182.7 C233.7,177.0 247.4,165.6 255.0,158.3 C262.6,151.0 262.9,145.7 265.0,139.0 C267.1,132.3 267.8,125.0 267.5,118.0 C267.2,111.0 264.9,103.3 263.0,97.0 C261.1,90.7 259.4,86.5 256.4,80.0 C253.4,73.5 246.9,61.7 245.0,58.0 A70 18 0 0 1 105.5 58 Z"/></clipPath>
</defs>
<path d="M106,55 C95,54 84,54 77,56 C70,58 66,62 66.300,68 C67,78 75,92 87,108 L92,97 C84,86 78,76 78.500,70 C79,65 84,64 90,64 L105,65 Z" fill="url(#thd)"/>
<path d="M104,57.500 C95,56.500 84,56.500 78,58.500 C72,60.500 69,64 69.500,69 C70,78 77,90 87,103" fill="none" stroke="#64b8c5" stroke-width="1.500" opacity=".6"/>
<g clip-path="url(#tbc)">
<rect x="80" y="50" width="195" height="150" fill="url(#tbH)"/>
<rect x="80" y="50" width="195" height="150" fill="url(#thl)"/>
<rect x="80" y="50" width="195" height="150" fill="url(#tbV)"/>
<path d="M105,60 A70 18 0 0 0 246 60" fill="none" stroke="#8fe0ea" stroke-width="9" opacity=".22" transform="translate(0 7)"/>
<path d="M105,60 A70 18 0 0 0 246 60" fill="none" stroke="#a8f0f6" stroke-width="3" opacity=".3" transform="translate(0 3)"/>
<g stroke="#1d5a68" opacity=".2" stroke-width="3" filter="url(#tbl)">
<path d="M120,90 V150"/><path d="M133,84 V158"/><path d="M150,96 V152"/><path d="M162,110 V150"/><path d="M188,100 V150"/><path d="M199,92 V156"/><path d="M214,88 V150"/><path d="M228,92 V152"/><path d="M243,96 V146"/>
</g>
<g stroke="#9fe6ee" opacity=".14" stroke-width="4" filter="url(#tbl)">
<path d="M142,86 V148"/><path d="M170,84 V140"/><path d="M181,84 V140"/><path d="M206,90 V148"/><path d="M236,94 V146"/>
</g>
<path d="M92,80 C88,100 84,120 86,140" fill="none" stroke="#7fd0dc" stroke-width="3" opacity=".25"/>
<path d="M84,146 C120,170 222,172 266,144 L266,200 L84,200 Z" fill="#062c36" opacity=".22"/>
<path d="M85,147 C120,169 221,171 265,145" fill="none" stroke="#6cc0cc" stroke-width="2" opacity=".38"/>
</g>
<path d="M259.8,118.5 C262.2,118.4 269.6,120.1 274.0,118.0 C278.4,115.9 282.5,110.3 286.0,106.0 C289.5,101.7 291.4,96.3 294.8,92.0 C298.2,87.7 303.3,82.4 306.7,80.0 C310.1,77.6 311.1,78.0 315.0,77.5 C318.9,77.0 327.5,77.1 330.0,77.0 L330.0,89.5 C328.4,90.5 323.6,93.4 320.4,95.5 C317.2,97.6 314.1,98.6 311.0,102.3 C307.9,106.0 304.9,111.6 301.6,117.6 C298.3,123.5 295.1,132.4 291.4,138.0 C287.7,143.6 285.4,148.6 279.4,151.0 C273.4,153.4 259.5,152.3 255.5,152.6 L250.4,148 L250.4,128 Z" fill="url(#tsp)"/>
<path d="M252.0,131.0 C256.0,130.7 269.7,131.8 276.0,129.0 C282.3,126.2 286.2,119.2 290.0,114.0 C293.8,108.8 295.7,102.7 299.0,98.0 C302.3,93.3 304.8,88.5 310.0,86.0 C315.2,83.5 326.7,83.5 330.0,83.0" fill="none" stroke="#5baebb" stroke-width="2.500" opacity=".45"/>
<path d="M252.0,143.0 C256.3,142.8 271.3,144.8 278.0,142.0 C284.7,139.2 288.2,131.7 292.0,126.0 C295.8,120.3 299.5,111.0 301.0,108.0" fill="none" stroke="#225f6b" stroke-width="2.500" opacity=".6"/>
<ellipse cx="175.500" cy="58" rx="69.500" ry="17" fill="#103a44"/>
<path d="M106,58 A70 18 0 0 0 245 58" fill="none" stroke="#79cfdb" stroke-width="1.600" opacity=".75"/>
<path d="M106,58 A69.500 17 0 0 1 245 58" fill="none" stroke="#3b8896" stroke-width="1.200"/>
<ellipse cx="175.500" cy="58.500" rx="63.500" ry="15.500" fill="url(#tlid)"/>
<path d="M159,29 C159,36 167,37 168,42 C168,47 165,50 156,54 L195,54 C187,50 184,47 184,42 C185,37 192.400,36 192.400,29 Z" fill="url(#tkn)"/>
<ellipse cx="176" cy="53" rx="9" ry="2.500" fill="#8fe0ea" opacity=".55"/>
<ellipse cx="175.700" cy="29" rx="16.700" ry="5.500" fill="#4a9dab"/>
<ellipse cx="175.700" cy="28.500" rx="11" ry="3" fill="#6cc2ce" opacity=".8"/>
</svg>
</div>
<div style="left:950px;top:74px;width:2px;height:601px;background:linear-gradient(90deg,#e3e3e3 50%,#fff 50%)"></div>
<div style="left:952px;top:74px;width:7px;height:601px;background:#d8e4f1"></div>
<div class="frame" style="left:626px;top:406px;width:192px;height:284px;background:linear-gradient(#c1cfdf 0,#d8e4f1 28px,#d8e4f1 100%)"></div>
<div class="u" style="top:415.8px;color:#4e5c69;letter-spacing:0;left:634px;">Actions</div>
<svg style="left:795px;top:416.5px" width="13" height="13" viewBox="0 0 13 13"><rect x=".5" y=".5" width="12" height="12" rx="2" fill="#dde6f2" stroke="#8391b3"/><path d="M3 3.500 h2.300 l1.200 1.400 l1.200 -1.400 h2.300 l-2.300 3 l2.300 3 h-2.300 l-1.200 -1.400 l-1.200 1.400 h-2.300 l2.300 -3z" fill="#fff" stroke="#3f4763" stroke-width=".9" stroke-linejoin="round"/></svg>
<div class="sunk" style="left:635px;top:435px;width:173px;height:245px;"></div>
<svg style="left:637px;top:437px" width="60" height="212" viewBox="637 437 60 212"><path d="M645.500 445 V637 " stroke="#808080" stroke-dasharray="1 1"/><path d="M650 445.5 H657" stroke="#808080" stroke-dasharray="1 1"/><rect x="641.500" y="441.5" width="8" height="8" fill="#fff" stroke="#808080"/><path d="M643.500 445.5 h4 M645.500 443.5 v4" stroke="#000"/><path d="M664 439.0 L671.500 439.0 L665 443.0 L671 444.0 L657 452.0 L662 446.5 L657.500 446.0 Z" fill="#fff" stroke="#000" stroke-width="1" stroke-linejoin="miter"/><path d="M671.500 439.0 l-4 0 l-1.500 1.500z M671 444.0 l-4.500 -.5 l-1 1.800z M657 452.0 l4.500 -5.500 l1 .8z" fill="#000" stroke="#000" stroke-width=".6"/><path d="M650 461.5 H657" stroke="#808080" stroke-dasharray="1 1"/><rect x="641.500" y="457.5" width="8" height="8" fill="#fff" stroke="#808080"/><path d="M643.500 461.5 h4 M645.500 459.5 v4" stroke="#000"/><path d="M664 455.0 L671.500 455.0 L665 459.0 L671 460.0 L657 468.0 L662 462.5 L657.500 462.0 Z" fill="#fff" stroke="#000" stroke-width="1" stroke-linejoin="miter"/><path d="M671.500 455.0 l-4 0 l-1.500 1.500z M671 460.0 l-4.500 -.5 l-1 1.800z M657 468.0 l4.500 -5.500 l1 .8z" fill="#000" stroke="#000" stroke-width=".6"/><path d="M650 477.5 H657" stroke="#808080" stroke-dasharray="1 1"/><rect x="641.500" y="473.5" width="8" height="8" fill="#fff" stroke="#808080"/><path d="M643.500 477.5 h4 M645.500 475.5 v4" stroke="#000"/><path d="M664 471.0 L671.500 471.0 L665 475.0 L671 476.0 L657 484.0 L662 478.5 L657.500 478.0 Z" fill="#fff" stroke="#000" stroke-width="1" stroke-linejoin="miter"/><path d="M671.500 471.0 l-4 0 l-1.500 1.500z M671 476.0 l-4.500 -.5 l-1 1.800z M657 484.0 l4.500 -5.500 l1 .8z" fill="#000" stroke="#000" stroke-width=".6"/><path d="M650 493.5 H657" stroke="#808080" stroke-dasharray="1 1"/><rect x="641.500" y="489.5" width="8" height="8" fill="#fff" stroke="#808080"/><path d="M643.500 493.5 h4 M645.500 491.5 v4" stroke="#000"/><path d="M664 487.0 L671.500 487.0 L665 491.0 L671 492.0 L657 500.0 L662 494.5 L657.500 494.0 Z" fill="#fff" stroke="#000" stroke-width="1" stroke-linejoin="miter"/><path d="M671.500 487.0 l-4 0 l-1.500 1.500z M671 492.0 l-4.500 -.5 l-1 1.800z M657 500.0 l4.500 -5.500 l1 .8z" fill="#000" stroke="#000" stroke-width=".6"/><path d="M650 509.5 H657" stroke="#808080" stroke-dasharray="1 1"/><rect x="641.500" y="505.5" width="8" height="8" fill="#fff" stroke="#808080"/><path d="M643.500 509.5 h4 M645.500 507.5 v4" stroke="#000"/><path d="M664 503.0 L671.500 503.0 L665 507.0 L671 508.0 L657 516.0 L662 510.5 L657.500 510.0 Z" fill="#fff" stroke="#000" stroke-width="1" stroke-linejoin="miter"/><path d="M671.500 503.0 l-4 0 l-1.500 1.500z M671 508.0 l-4.500 -.5 l-1 1.800z M657 516.0 l4.500 -5.500 l1 .8z" fill="#000" stroke="#000" stroke-width=".6"/><path d="M650 525.5 H657" stroke="#808080" stroke-dasharray="1 1"/><rect x="641.500" y="521.5" width="8" height="8" fill="#fff" stroke="#808080"/><path d="M643.500 525.5 h4 M645.500 523.5 v4" stroke="#000"/><path d="M664 519.0 L671.500 519.0 L665 523.0 L671 524.0 L657 532.0 L662 526.5 L657.500 526.0 Z" fill="#fff" stroke="#000" stroke-width="1" stroke-linejoin="miter"/><path d="M671.500 519.0 l-4 0 l-1.500 1.500z M671 524.0 l-4.500 -.5 l-1 1.800z M657 532.0 l4.500 -5.500 l1 .8z" fill="#000" stroke="#000" stroke-width=".6"/><path d="M650 541.5 H657" stroke="#808080" stroke-dasharray="1 1"/><rect x="641.500" y="537.5" width="8" height="8" fill="#fff" stroke="#808080"/><path d="M643.500 541.5 h4 M645.500 539.5 v4" stroke="#000"/><path d="M664 535.0 L671.500 535.0 L665 539.0 L671 540.0 L657 548.0 L662 542.5 L657.500 542.0 Z" fill="#fff" stroke="#000" stroke-width="1" stroke-linejoin="miter"/><path d="M671.500 535.0 l-4 0 l-1.500 1.500z M671 540.0 l-4.500 -.5 l-1 1.800z M657 548.0 l4.500 -5.500 l1 .8z" fill="#000" stroke="#000" stroke-width=".6"/><path d="M650 557.5 H657" stroke="#808080" stroke-dasharray="1 1"/><rect x="641.500" y="553.5" width="8" height="8" fill="#fff" stroke="#808080"/><path d="M643.500 557.5 h4 M645.500 555.5 v4" stroke="#000"/><path d="M664 551.0 L671.500 551.0 L665 555.0 L671 556.0 L657 564.0 L662 558.5 L657.500 558.0 Z" fill="#fff" stroke="#000" stroke-width="1" stroke-linejoin="miter"/><path d="M671.500 551.0 l-4 0 l-1.500 1.500z M671 556.0 l-4.500 -.5 l-1 1.800z M657 564.0 l4.500 -5.500 l1 .8z" fill="#000" stroke="#000" stroke-width=".6"/><path d="M650 573.5 H657" stroke="#808080" stroke-dasharray="1 1"/><rect x="641.500" y="569.5" width="8" height="8" fill="#fff" stroke="#808080"/><path d="M643.500 573.5 h4 M645.500 571.5 v4" stroke="#000"/><path d="M664 567.0 L671.500 567.0 L665 571.0 L671 572.0 L657 580.0 L662 574.5 L657.500 574.0 Z" fill="#fff" stroke="#000" stroke-width="1" stroke-linejoin="miter"/><path d="M671.500 567.0 l-4 0 l-1.500 1.500z M671 572.0 l-4.500 -.5 l-1 1.800z M657 580.0 l4.500 -5.500 l1 .8z" fill="#000" stroke="#000" stroke-width=".6"/><path d="M650 589.5 H657" stroke="#808080" stroke-dasharray="1 1"/><rect x="641.500" y="585.5" width="8" height="8" fill="#fff" stroke="#808080"/><path d="M643.500 589.5 h4 M645.500 587.5 v4" stroke="#000"/><path d="M664 583.0 L671.500 583.0 L665 587.0 L671 588.0 L657 596.0 L662 590.5 L657.500 590.0 Z" fill="#fff" stroke="#000" stroke-width="1" stroke-linejoin="miter"/><path d="M671.500 583.0 l-4 0 l-1.500 1.500z M671 588.0 l-4.500 -.5 l-1 1.800z M657 596.0 l4.500 -5.500 l1 .8z" fill="#000" stroke="#000" stroke-width=".6"/><path d="M650 605.5 H657" stroke="#808080" stroke-dasharray="1 1"/><rect x="641.500" y="601.5" width="8" height="8" fill="#fff" stroke="#808080"/><path d="M643.500 605.5 h4 M645.500 603.5 v4" stroke="#000"/><path d="M664 599.0 L671.500 599.0 L665 603.0 L671 604.0 L657 612.0 L662 606.5 L657.500 606.0 Z" fill="#fff" stroke="#000" stroke-width="1" stroke-linejoin="miter"/><path d="M671.500 599.0 l-4 0 l-1.500 1.500z M671 604.0 l-4.500 -.5 l-1 1.800z M657 612.0 l4.500 -5.500 l1 .8z" fill="#000" stroke="#000" stroke-width=".6"/><path d="M650 621.5 H657" stroke="#808080" stroke-dasharray="1 1"/><rect x="641.500" y="617.5" width="8" height="8" fill="#fff" stroke="#808080"/><path d="M643.500 621.5 h4 M645.500 619.5 v4" stroke="#000"/><path d="M664 615.0 L671.500 615.0 L665 619.0 L671 620.0 L657 628.0 L662 622.5 L657.500 622.0 Z" fill="#fff" stroke="#000" stroke-width="1" stroke-linejoin="miter"/><path d="M671.500 615.0 l-4 0 l-1.500 1.500z M671 620.0 l-4.500 -.5 l-1 1.800z M657 628.0 l4.500 -5.500 l1 .8z" fill="#000" stroke="#000" stroke-width=".6"/><path d="M650 637.5 H657" stroke="#808080" stroke-dasharray="1 1"/><rect x="641.500" y="633.5" width="8" height="8" fill="#fff" stroke="#808080"/><path d="M643.500 637.5 h4 M645.500 635.5 v4" stroke="#000"/><path d="M664 631.0 L671.500 631.0 L665 635.0 L671 636.0 L657 644.0 L662 638.5 L657.500 638.0 Z" fill="#fff" stroke="#000" stroke-width="1" stroke-linejoin="miter"/><path d="M671.500 631.0 l-4 0 l-1.500 1.500z M671 636.0 l-4.500 -.5 l-1 1.800z M657 644.0 l4.500 -5.500 l1 .8z" fill="#000" stroke="#000" stroke-width=".6"/></svg>
<div class="s" style="top:438.5px;color:#000;left:677.3px;">Object motion</div>
<div class="s" style="top:454.5px;color:#000;left:677.3px;">Interactivity</div>
<div class="s" style="top:470.5px;color:#000;left:677.3px;">Vertex-level animation</div>
<div class="s" style="top:486.5px;color:#000;left:677.3px;">Camera</div>
<div class="s" style="top:502.5px;color:#000;left:677.3px;">Sound</div>
<div class="s" style="top:518.5px;color:#000;left:677.3px;">World</div>
<div class="s" style="top:534.5px;color:#000;left:677.3px;">Connection</div>
<div class="s" style="top:550.5px;color:#000;left:677.3px;">Event</div>
<div class="s" style="top:566.5px;color:#000;left:677.3px;">Render</div>
<div class="s" style="top:582.5px;color:#000;left:677.3px;">Textures</div>
<div class="s" style="top:598.5px;color:#000;left:677.3px;">Expressions</div>
<div class="s" style="top:614.5px;color:#000;left:677.3px;">Cursors/Sprites</div>
<div class="s" style="top:630.5px;color:#000;left:677.3px;">Particle systems</div>
<div style="left:103px;top:85px;width:474px;height:310px;border:1px solid #0a0a0a;border-radius:7px 7px 0 0;background:#f0f0f0;box-shadow:inset -1px -1px 0 #3cdcff,inset 1px 1px 0 #f4f7fb,inset -2px -2px 0 #dadef0;overflow:hidden"><div style="left:1px;top:1px;width:470px;height:21px;background:linear-gradient(#99b2d5 0,#a9c3e1 50%,#b9d2eb 100%)"></div></div>
<div class="u" style="top:90.6px;color:#000;letter-spacing:-.3px;left:110.4px;">Preferences</div>
<div style="left:171px;top:73.500px;font-family:'Liberation Serif',serif;font-weight:bold;font-size:23px;line-height:26px;letter-spacing:-1.050px;color:#fff;opacity:.36;white-space:pre;text-shadow:0 1px 0 rgba(90,100,120,.5)">SOFTPEDIA</div>
<div style="left:294px;top:75px;font-size:6px;line-height:7px;color:#fff;opacity:.45;font-weight:bold">TM</div>
<div style="left:192px;top:103px;font-family:'Liberation Sans',sans-serif;font-weight:bold;font-size:12px;line-height:13px;color:#fff;opacity:.62;text-shadow:0 0 1.500px rgba(110,120,140,.9);white-space:pre;transform:scaleX(.72);transform-origin:0 0">www.softpedia.com</div>
<div style="left:105px;top:108px;width:1px;height:284px;background:#c4d8f0"></div>
<div class="pane" style="left:114px;top:136px;width:450px;height:216px;"></div>
<div class="tab" style="left:117px;top:119px;width:61px;height:17px;"></div>
<div class="s" style="top:122.0px;color:#000;left:121.5px;">Directories</div>
<div class="tab" style="left:178px;top:119px;width:42px;height:17px;"></div>
<div class="s" style="top:122.0px;color:#000;left:182.5px;">Java</div>
<div class="tab" style="left:221px;top:119px;width:63px;height:17px;"></div>
<div class="s" style="top:122.0px;color:#000;left:225.7px;">Event Map</div>
<div class="tab" style="left:285px;top:119px;width:44px;height:17px;"></div>
<div class="s" style="top:122.0px;color:#000;left:289.8px;">Metrics</div>
<div class="tab" style="left:411px;top:119px;width:48px;height:17px;"></div>
<div class="s" style="top:122.0px;color:#000;left:414.3px;">General</div>
<div class="tab" style="left:329px;top:117px;width:82px;height:20px;"></div>
<div class="s" style="top:119.5px;color:#000;left:335.3px;">Grid &amp; Helpers</div>
<div class="pane" style="left:119px;top:161px;width:438px;height:185px;"></div>
<div class="tab" style="left:165px;top:144px;width:45px;height:17px;"></div>
<div class="s" style="top:147.0px;color:#000;left:168.8px;">Screen</div>
<div class="tab" style="left:210px;top:144px;width:82px;height:17px;"></div>
<div class="s" style="top:147.0px;color:#000;left:214.8px;">3D Safe Frame</div>
<div class="tab" style="left:293px;top:144px;width:52px;height:17px;"></div>
<div class="s" style="top:147.0px;color:#000;left:297.3px;">Cameras</div>
<div class="tab" style="left:120px;top:142px;width:45px;height:20px;"></div>
<div class="s" style="top:144.5px;color:#000;left:126.5px;">Grid</div>
<div class="chk" style="left:157px;top:195px;width:13px;height:13px;"></div>
<svg style="left:157px;top:195px" width="13" height="13" viewBox="0 0 13 13"><path d="M3 5.500 L5.500 8 L10 3.500" fill="none" stroke="#000" stroke-width="2"/></svg>
<div class="s" style="top:195.5px;color:#000;left:174.5px;">Display</div>
<div class="s r" style="top:247.7px;color:#000;right:659.5px;">Extension</div>
<div class="sunk1" style="left:307px;top:244px;width:60px;height:20px;"></div>
<div class="s" style="top:245.9px;color:#000;left:308.5px;">1</div>
<div class="s r" style="top:271.5px;color:#000;right:659.5px;">Distance between major lines</div>
<div class="sunk1" style="left:307px;top:268px;width:60px;height:20px;"></div>
<div class="s" style="top:269.9px;color:#000;left:308.5px;">0.1</div>
<div class="s r" style="top:297.2px;color:#000;right:659.5px;">Number of subdivisions</div>
<div class="sunk1" style="left:307px;top:293px;width:60px;height:20px;"></div>
<div class="s" style="top:294.9px;color:#000;left:308.5px;">5</div>
<div class="s r" style="top:224.5px;color:#000;right:476.4px;">Background color</div>
<div class="sw" style="left:493px;top:218px;width:27px;height:18px;background:#000033"></div>
<div class="s r" style="top:248.7px;color:#000;right:476.4px;">Origin lines color</div>
<div class="sw" style="left:493px;top:244px;width:27px;height:18px;background:#00ff00"></div>
<div class="s r" style="top:272.2px;color:#000;right:476.4px;">Major lines color</div>
<div class="sw" style="left:493px;top:268px;width:27px;height:18px;background:#009900"></div>
<div class="s r" style="top:296.9px;color:#000;right:476.4px;">Subdivision lines color</div>
<div class="sw" style="left:493px;top:293px;width:27px;height:18px;background:#004d00"></div>
<div class="rais" style="left:489px;top:360px;width:75px;height:23px;"></div>
<div class="s" style="top:364.5px;color:#000;left:513.3px;">Close</div>
</div></body></html>
